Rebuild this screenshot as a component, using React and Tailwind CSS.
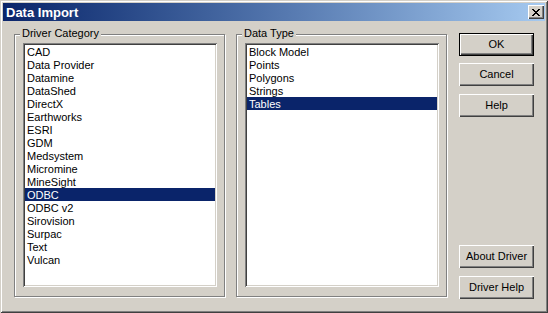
import React from "react";

const driverItems = [
  "CAD", "Data Provider", "Datamine", "DataShed", "DirectX", "Earthworks", "ESRI", "GDM",
  "Medsystem", "Micromine", "MineSight", "ODBC", "ODBC v2", "Sirovision", "Surpac", "Text", "Vulcan",
];
const typeItems = ["Block Model", "Points", "Polygons", "Strings", "Tables"];

function ListBox({ items, selected }) {
  return (
    <div className="w-[194px] h-[244px] bg-white p-[2px] shadow-[inset_1px_1px_#808080,inset_-1px_-1px_#ffffff,inset_2px_2px_#404040,inset_-2px_-2px_#d4d0c8]">
      {items.map((it) => (
        <div
          key={it}
          className={
            it === selected
              ? "h-[13px] leading-[14px] pl-[2px] whitespace-nowrap bg-[#0a246a] text-white"
              : "h-[13px] leading-[14px] pl-[2px] whitespace-nowrap text-black"
          }
        >
          {it}
        </div>
      ))}
    </div>
  );
}

function Group({ label, children }) {
  return (
    <div className="relative w-[211px] h-[263px] border border-[#808080] shadow-[inset_1px_1px_#ffffff,1px_1px_#ffffff] pl-[8px] pt-[8px]">
      <span className="absolute left-[5px] top-[-8px] px-[2px] bg-[#d4d0c8] leading-[13px] whitespace-nowrap">
        {label}
      </span>
      {children}
    </div>
  );
}

function Btn({ children, def, className = "" }) {
  const base = "w-[75px] h-[23px] flex items-center justify-center text-black leading-none " + className;
  if (def) {
    return (
      <button type="button" className={base + " border border-black shadow-[inset_1px_1px_#ffffff,inset_-1px_-1px_#404040,inset_-2px_-2px_#808080]"}>
        {children}
      </button>
    );
  }
  return (
    <button type="button" className={base + " shadow-[inset_1px_1px_#ffffff,inset_-1px_-1px_#404040,inset_-2px_-2px_#808080,inset_2px_2px_#d4d0c8]"}>
      {children}
    </button>
  );
}

function CloseIcon() {
  const rects = [
    [0, 0, 2], [6, 0, 2],
    [1, 1, 2], [5, 1, 2],
    [2, 2, 4],
    [3, 3, 2],
    [2, 4, 4],
    [1, 5, 2], [5, 5, 2],
    [0, 6, 2], [6, 6, 2],
  ];
  return (
    <svg width="8" height="7" viewBox="0 0 8 7" shapeRendering="crispEdges">
      {rects.map(([x, y, w], i) => (
        <rect key={i} x={x} y={y} width={w} height="1" fill="#000" />
      ))}
    </svg>
  );
}

export default function App() {
  return (
    <div className="w-[548px] h-[313px] bg-[#d4d0c8] p-[3px] flex flex-col font-['Liberation_Sans',Arial,sans-serif] text-[11px] text-black shadow-[inset_1px_1px_#d4d0c8,inset_-1px_-1px_#404040,inset_2px_2px_#ffffff,inset_-2px_-2px_#808080]">
      <div className="h-[18px] flex items-center pl-[3px] pr-[1px] bg-linear-to-r from-[#0a246a] to-[#a6caf0]">
        <span className="text-white font-bold text-[13px] leading-none">Data Import</span>
        <div className="ml-auto w-[16px] h-[14px] bg-[#d4d0c8] flex items-center justify-center pt-[1px] shadow-[inset_1px_1px_#ffffff,inset_-1px_-1px_#404040,inset_-2px_-2px_#808080,inset_2px_2px_#d4d0c8]">
          <CloseIcon />
        </div>
      </div>
      <div className="flex pt-[12px] pl-[11px]">
        <div className="mt-[1px]">
          <Group label="Driver Category">
            <ListBox items={driverItems} selected="ODBC" />
          </Group>
        </div>
        <div className="mt-[1px] ml-[11px]">
          <Group label="Data Type">
            <ListBox items={typeItems} selected="Tables" />
          </Group>
        </div>
        <div className="ml-[12px] flex flex-col">
          <Btn def>OK</Btn>
          <Btn className="mt-[7px]">Cancel</Btn>
          <Btn className="mt-[8px]">Help</Btn>
          <Btn className="mt-[128px]">About Driver</Btn>
          <Btn className="mt-[8px]">Driver Help</Btn>
        </div>
      </div>
    </div>
  );
}
